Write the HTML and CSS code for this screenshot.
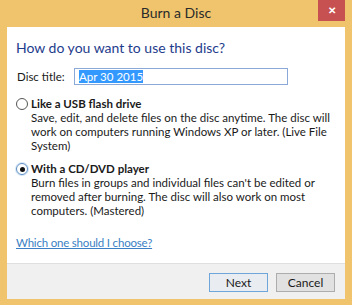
FILE: index.html
```html
<!DOCTYPE html>
<html>
<head>
  <meta charset="UTF-8" />
  <title>Burn a Disc</title>
  <link rel="stylesheet" href="styles.css">
</head>
<body>
<div class="window">
  <!-- Title bar -->
  <div class="titlebar">
    <span></span>
    <span class="title">Burn a Disc</span>
    <span class="close">&#x2715;</span>
  </div>

  <div class="content">
    <h1>How do you want to use this disc?</h1>

    <div class="field">
      <label>Disc title:</label>
      <div class="textbox"><span class="selected">Apr 30 2015</span></div>
    </div>

    <div class="option">
      <span class="radio"></span>
      <div>
        <div class="option-title">Like a USB flash drive</div>
        <div class="option-desc">Save, edit, and delete files on the disc anytime. The disc will<br>work on computers running Windows XP or later. (Live File<br>System)</div>
      </div>
    </div>

    <div class="option second">
      <span class="radio checked"></span>
      <div>
        <div class="option-title">With a CD/DVD player</div>
        <div class="option-desc">Burn files in groups and individual files can't be edited or<br>removed after burning. The disc will also work on most<br>computers. (Mastered)</div>
      </div>
    </div>

    <a class="help" href="#">Which one should I choose?</a>
  </div>

  <!-- Button row -->
  <div class="footer">
    <button class="default">Next</button>
    <button>Cancel</button>
  </div>
</div>
</body>
</html>
```

FILE: styles.css
```css
body {
  margin: 0;
  font-family: "Segoe UI", Lato, sans-serif;
  font-size: 11.5px;
  color: #1a1a1a;
}
.window {
  width: 352px;
  height: 305px;
  box-sizing: border-box;
  background-color: #f0c46c;
  padding: 0 7px 6px 7px;
  display: flex;
  flex-direction: column;
}
.titlebar {
  height: 27px;
  display: grid;
  grid-template-columns: 1fr auto 1fr;
  align-items: start;
}
.title {
  font-size: 14px;
  color: #2b2b2b;
  line-height: 26px;
}
.close {
  justify-self: end;
  width: 27px;
  height: 21px;
  background-color: #c75050;
  color: #fff;
  font-size: 10px;
  font-weight: bold;
  line-height: 21px;
  text-align: center;
}
.content {
  flex: 1;
  background-color: #fff;
  padding: 11px 9px 0 9px;
}
h1 {
  margin: 0;
  font-size: 14px;
  font-weight: normal;
  line-height: 20px;
  color: #1e3c8c;
}
.field {
  display: flex;
  align-items: center;
  margin-top: 10px;
}
.field label {
  width: 57px;
  padding-left: 1px;
}
.textbox {
  width: 208px;
  height: 15px;
  border: 1px solid #8aa8d8;
  padding-left: 4px;
  line-height: 15px;
}
.selected {
  background-color: #3399ff;
  color: #fff;
}
.option {
  display: flex;
  margin-top: 12px;
  line-height: 14px;
}
.option.second {
  margin-top: 9px;
}
.radio {
  width: 12px;
  height: 12px;
  border: 1px solid #555;
  border-radius: 50%;
  box-sizing: border-box;
  margin: 1px 3px 0 0;
  flex-shrink: 0;
  position: relative;
}
.radio.checked {
  border-color: #5b8ec4;
  box-shadow: 0 0 0 1px #d4e5f6;
}
.radio.checked::after {
  content: "";
  position: absolute;
  left: 2.5px;
  top: 2.5px;
  width: 5px;
  height: 5px;
  border-radius: 50%;
  background-color: #111;
}
.option-title {
  font-weight: bold;
}
.option-desc {
  white-space: nowrap;
}
.help {
  display: inline-block;
  margin-top: 18px;
  color: #3b7fc4;
  letter-spacing: -0.2px;
}
.footer {
  height: 36px;
  box-sizing: border-box;
  background-color: #f0f0f0;
  border-top: 1px solid #dfdfdf;
  display: flex;
  justify-content: flex-end;
  align-items: flex-start;
  gap: 8px;
  padding: 9px 10px 0 0;
}
button {
  width: 59px;
  height: 19px;
  padding: 0;
  font-family: inherit;
  font-size: 12px;
  color: #1a1a1a;
  background-color: #e1e1e1;
  border: 1px solid #adadad;
}
button.default {
  border-color: #6fa6d9;
  background-color: #e9edf1;
}
```
